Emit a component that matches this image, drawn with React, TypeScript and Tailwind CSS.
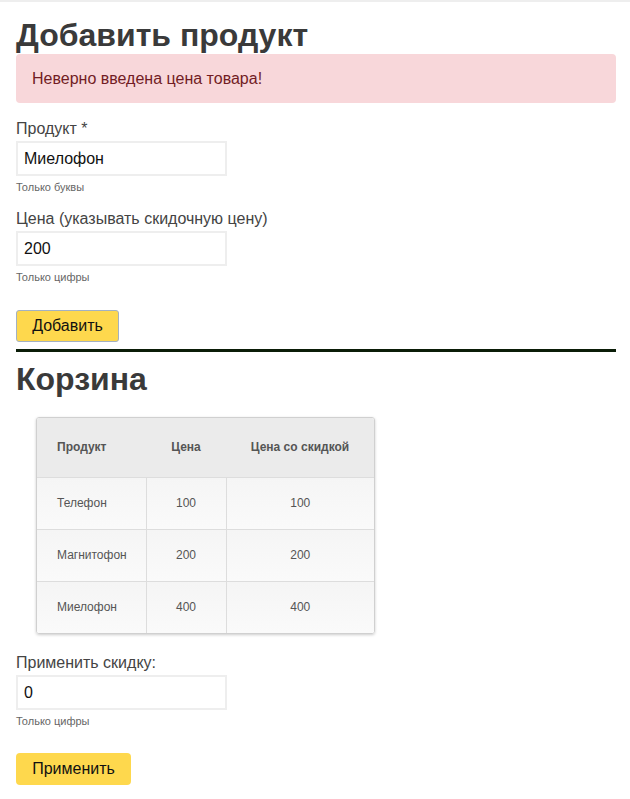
const rows = [
  { name: "Телефон", price: 100, discount: 100 },
  { name: "Магнитофон", price: 200, discount: 200 },
  { name: "Миелофон", price: 400, discount: 400 },
];

function Field({ label, value, hint }: { label: string; value: string; hint: string }) {
  return (
    <div>
      <label className="block text-[16px] leading-[18px] text-[#444]">{label}</label>
      <input
        readOnly
        value={value}
        className="mt-[3px] block h-[35px] w-[211px] border-2 border-[#eeeeee] bg-white px-[6px] text-[16px] text-[#111] outline-none"
      />
      <p className="mt-[5px] text-[11px] leading-[13px] text-[#666]">{hint}</p>
    </div>
  );
}

export default function App() {
  return (
    <div
      className="min-h-[799px] border-t-2 border-[#eeeeee] bg-white pl-4 pr-[14px] pt-[14px]"
      style={{ fontFamily: '"Liberation Sans", Arial, sans-serif' }}
    >
      <h1 className="text-[32px] font-bold leading-[38px] text-[#3a3a3a]">Добавить продукт</h1>

      <div className="rounded bg-[#f8d7da] px-4 py-[15px] text-[16px] leading-[19px] text-[#721c24]">
        Неверно введена цена товара!
      </div>

      <div className="mt-[17px]">
        <Field label="Продукт *" value="Миелофон" hint="Только буквы" />
      </div>
      <div className="mt-[16px]">
        <Field label="Цена (указывать скидочную цену)" value="200" hint="Только цифры" />
      </div>

      <button className="mt-[26px] block h-[32px] w-[103px] rounded-[3px] border border-[#a3b1c2] bg-[#fed84d] text-[16px] text-[#111]">
        Добавить
      </button>

      <div className="mt-[7px] h-[3px] w-full bg-[#0b1d08]" />

      <h2 className="mt-[8px] text-[32px] font-bold leading-[38px] text-[#3a3a3a]">Корзина</h2>

      <div className="ml-5 mt-[19px] w-[339px] overflow-hidden rounded-[3px] border border-[#d0d0d0] shadow-[0_1px_3px_rgba(0,0,0,0.2)]">
        <table className="w-full border-collapse text-[12px] text-[#555]">
          <thead>
            <tr className="h-[59px] bg-[#ebebeb]">
              <th className="w-[109px] pl-[20px] text-left font-bold">Продукт</th>
              <th className="w-[80px] text-center font-bold">Цена</th>
              <th className="text-center font-bold">Цена со скидкой</th>
            </tr>
          </thead>
          <tbody>
            {rows.map((r) => (
              <tr key={r.name} className="h-[52px] border-t border-[#dddddd] bg-gradient-to-b from-[#f5f5f5] to-[#fafafa]">
                <td className="border-r border-[#dddddd] pl-[20px]">{r.name}</td>
                <td className="border-r border-[#dddddd] text-center">{r.price}</td>
                <td className="text-center">{r.discount}</td>
              </tr>
            ))}
          </tbody>
        </table>
      </div>

      <div className="mt-[20px]">
        <Field label="Применить скидку:" value="0" hint="Только цифры" />
      </div>

      <button className="mt-[25px] block h-[32px] w-[115px] rounded bg-[#fed84d] text-[16px] text-[#111]">
        Применить
      </button>
    </div>
  );
}
